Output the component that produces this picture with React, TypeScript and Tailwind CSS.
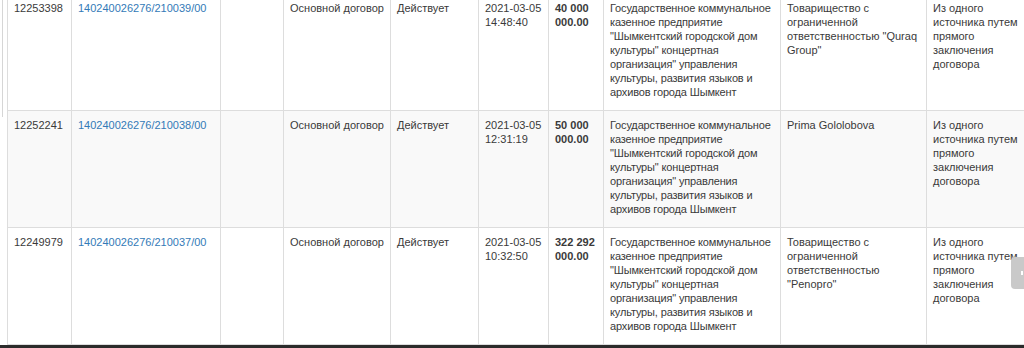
import React from 'react';

const ROWS = [
  {
    id: '12253398',
    number: '140240026276/210039/00',
    date: '2021-03-05',
    time: '14:48:40',
    amount: '40 000 000.00',
    supplier: 'Товарищество с ограниченной ответственностью "Quraq Group"',
  },
  {
    id: '12252241',
    number: '140240026276/210038/00',
    date: '2021-03-05',
    time: '12:31:19',
    amount: '50 000 000.00',
    supplier: 'Prima Gololobova',
  },
  {
    id: '12249979',
    number: '140240026276/210037/00',
    date: '2021-03-05',
    time: '10:32:50',
    amount: '322 292 000.00',
    supplier: 'Товарищество с ограниченной ответственностью "Penopro"',
  },
];

// customer name, broken the way the source page wraps it
const CUSTOMER_LINES = [
  'Государственное коммунальное',
  'казенное предприятие',
  '"Шымкентский городской дом',
  'культуры" концертная',
  'организация" управления',
  'культуры, развития языков и',
  'архивов города Шымкент',
];

const td = 'border border-[#dddddd] align-top pl-[6px] pr-[6px] pt-[7px] pb-[11px]';

export default function App() {
  return (
    <div
      className="relative w-[1024px] h-[348px] overflow-hidden bg-white text-[#3a3a3a] text-[11px] leading-[14px]"
      style={{ fontFamily: '"Liberation Sans", Arial, sans-serif' }}
    >
      {/* outer frame edge on the left */}
      <div className="absolute left-[2px] top-0 w-px h-[117px] bg-[#d6d6d6]" />

      <div className="ml-[7px] mt-[-7px]">
        <table className="table-fixed border-collapse w-[1033px]">
          <colgroup>
            <col className="w-[64px]" />
            <col className="w-[149px]" />
            <col className="w-[63px]" />
            <col className="w-[107px]" />
            <col className="w-[88px]" />
            <col className="w-[70px]" />
            <col className="w-[55px]" />
            <col className="w-[177px]" />
            <col className="w-[146px]" />
            <col className="w-[114px]" />
          </colgroup>
          <tbody>
            {ROWS.map((r, i) => (
              <tr key={r.id} className={i % 2 === 1 ? 'bg-[#f9f9f9]' : 'bg-white'}>
                <td className={td}>{r.id}</td>
                <td className={td}>
                  <a className="text-[#337ab7]">{r.number}</a>
                </td>
                <td className={td}></td>
                <td className={td}>Основной договор</td>
                <td className={td}>Действует</td>
                <td className={td}>
                  {r.date}
                  <br />
                  {r.time}
                </td>
                <td className={`${td} font-bold`}>{r.amount}</td>
                <td className={`${td} whitespace-nowrap tracking-[-0.15px]`}>
                  {CUSTOMER_LINES.map(l => (
                    <div key={l}>{l}</div>
                  ))}
                </td>
                <td className={td}>{r.supplier}</td>
                <td className={`${td} pr-[12px]`}>Из одного источника путем прямого заключения договора</td>
              </tr>
            ))}
          </tbody>
        </table>
      </div>

      {/* side tab */}
      <div className="absolute right-0 top-[257px] w-[13px] h-[32px] bg-[#c9c9c9] rounded-l-[4px] flex items-center justify-end">
        <span className="block w-[2px] h-[4px] bg-white mr-[1px]" />
      </div>

      {/* dark edge at the bottom */}
      <div className="absolute left-0 bottom-0 w-full h-[3px] bg-[#2b2b2b]" />
    </div>
  );
}
